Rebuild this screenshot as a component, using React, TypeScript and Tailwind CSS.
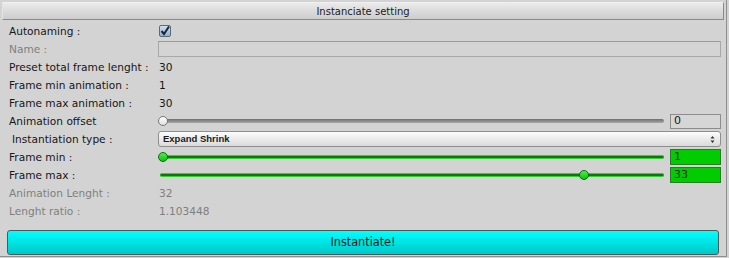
import React from "react";

const font = { fontFamily: '"DejaVu Sans", "Liberation Sans", sans-serif' };

function Row({ label, disabled, indent, children }: { label: string; disabled?: boolean; indent?: boolean; children?: React.ReactNode }) {
  return (
    <div className="flex h-[18px] items-center">
      <div className={`w-[149px] shrink-0 text-[10.6px] leading-none ${indent ? "pl-[3px]" : ""} ${disabled ? "text-[#7f7f7f]" : "text-[#161616]"}`}>{label}</div>
      <div className="flex min-w-0 flex-1 items-center pr-[5px]">{children}</div>
    </div>
  );
}

function Value({ v, disabled }: { v: string; disabled?: boolean }) {
  return <span className={`pl-[1px] text-[10.6px] leading-none ${disabled ? "text-[#7f7f7f]" : "text-[#161616]"}`}>{v}</span>;
}

function Slider({ pct, green }: { pct: number; green?: boolean }) {
  return (
    <div className="relative flex h-[14px] flex-1 items-center pl-[2px] pr-[6px]">
      <div
        className={
          green
            ? "h-[4px] w-full rounded-full border-y border-[#30d030] bg-[#0b7a0b]"
            : "h-[4px] w-full rounded-full bg-gradient-to-b from-[#6e6e6e] to-[#a8a8a8]"
        }
      />
      <div
        className={
          green
            ? "absolute top-[2px] h-[10px] w-[10px] rounded-full border border-[#0a700a] bg-gradient-to-b from-[#44f044] to-[#10c010]"
            : "absolute top-[2px] h-[10px] w-[10px] rounded-full border border-[#777] bg-gradient-to-b from-white to-[#e0e0e0]"
        }
        style={{ left: `calc(${pct}% * 0.98)` }}
      />
    </div>
  );
}

function Field({ v, green }: { v: string; green?: boolean }) {
  return (
    <div
      className={
        green
          ? "flex h-[16px] w-[51px] shrink-0 items-center border border-[#2a7a2a] bg-[#00cc00] pl-[3px] text-[11px] text-[#0b2a0b]"
          : "flex h-[15px] w-[51px] shrink-0 items-center border border-[#8c8c8c] bg-[#d6d6d6] pl-[3px] text-[11px] text-[#161616]"
      }
    >
      {v}
    </div>
  );
}

export default function App() {
  return (
    <div className="h-[258px] w-[729px] bg-[#d3d3d3]" style={font}>
      <div className="h-[257px] w-[727px] border-b border-r border-[#8f8f8f] pt-[2px]">
        <div className="mx-[2px] flex h-[18px] items-center justify-center border border-b-[#8a8a8a] border-l-[#e4e4e4] border-r-[#8a8a8a] border-t-[#f0f0f0] bg-gradient-to-b from-[#eaeaea] to-[#cdcdcd] text-[10px] text-[#1a1a1a]">
          Instanciate setting
        </div>
        <div className="mt-[2px] pl-[9px]">
          <Row label="Autonaming :">
            <div className="ml-[1px] flex h-[12px] w-[12px] items-center justify-center rounded-[2px] border border-[#5a6a7a] bg-gradient-to-b from-[#cfe0f0] to-[#8fb0d0]">
              <svg width="10" height="10" viewBox="0 0 10 10">
                <path d="M1.5 5 L4 8 L9 0.5" fill="none" stroke="#1b2733" strokeWidth="2" />
              </svg>
            </div>
          </Row>
          <Row label="Name :" disabled>
            <div className="h-[16px] w-full border border-[#a8a8a8] border-t-[#9a9a9a] bg-[#d4d4d4]" />
          </Row>
          <Row label="Preset total frame lenght :">
            <Value v="30" />
          </Row>
          <Row label="Frame min animation :">
            <Value v="1" />
          </Row>
          <Row label="Frame max animation :">
            <Value v="30" />
          </Row>
          <Row label="Animation offset">
            <Slider pct={0} />
            <Field v="0" />
          </Row>
          <Row label="Instantiation type :" indent>
            <div className="flex h-[16px] w-full items-center justify-between rounded-[3px] border border-[#8e8e8e] bg-gradient-to-b from-[#fdfdfd] to-[#dadada] pl-[4px] pr-[5px]">
              <span className="text-[9.5px] font-bold text-[#1a1a1a]" style={{ fontFamily: '"Liberation Sans", sans-serif' }}>Expand Shrink</span>
              <svg width="5" height="9" viewBox="0 0 5 9">
                <path d="M0.5 3.5 L2.5 1 L4.5 3.5 Z M0.5 5.5 L2.5 8 L4.5 5.5 Z" fill="#333" />
              </svg>
            </div>
          </Row>
          <Row label="Frame min :">
            <Slider pct={0} green />
            <Field v="1" green />
          </Row>
          <Row label="Frame max :">
            <Slider pct={84} green />
            <Field v="33" green />
          </Row>
          <Row label="Animation Lenght :" disabled>
            <Value v="32" disabled />
          </Row>
          <Row label="Lenght ratio :" disabled>
            <Value v="1.103448" disabled />
          </Row>
        </div>
        <div className="mx-[7px] mt-[10px] flex h-[25px] items-center justify-center rounded-[3px] border border-[#4a5a5a] bg-gradient-to-b from-[#00ffff] to-[#00c8c8]">
          <span className="text-[12.5px] text-[#0a1a1a]" style={{ fontFamily: '"Liberation Sans Narrow", "DejaVu Sans Condensed", "Liberation Sans", sans-serif' }}>
            Instantiate!
          </span>
        </div>
      </div>
    </div>
  );
}
